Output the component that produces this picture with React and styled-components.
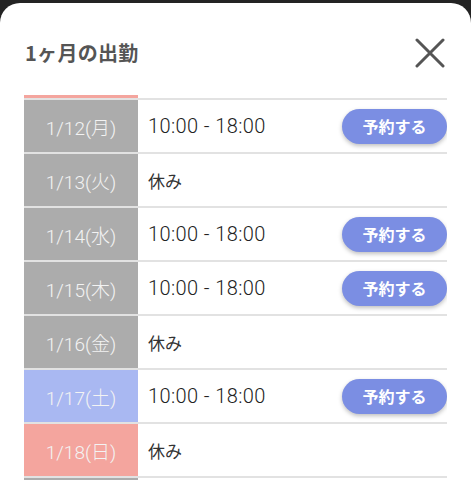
import React, { useLayoutEffect, useRef } from 'react'
import styled, { createGlobalStyle } from 'styled-components'

const GlobalStyle = createGlobalStyle`
html, body {
  margin: 0;
  padding: 0;
  background: #232323;
  font-family: "Noto Sans CJK JP", "Noto Sans", Roboto, sans-serif;
}
`

const shifts = [
  { date: '1/11', day: '日', time: null },
  { date: '1/12', day: '月', time: '10:00 - 18:00' },
  { date: '1/13', day: '火', time: null },
  { date: '1/14', day: '水', time: '10:00 - 18:00' },
  { date: '1/15', day: '木', time: '10:00 - 18:00' },
  { date: '1/16', day: '金', time: null },
  { date: '1/17', day: '土', time: '10:00 - 18:00' },
  { date: '1/18', day: '日', time: null },
  { date: '1/19', day: '月', time: '10:00 - 18:00' },
  { date: '1/20', day: '火', time: null },
]

const dayColor = (day) => {
  if (day === '土') return '#a9b8f2'
  if (day === '日') return '#f4a59e'
  return '#acacac'
}

function App() {
  const listRef = useRef(null)

  useLayoutEffect(() => {
    if (listRef.current) listRef.current.scrollTop = 49
  }, [])

  return (
    <>
      <GlobalStyle />
      <Sheet>
        <Header>
          <Title>1ヶ月の出勤</Title>
          <CloseButton aria-label="close">
            <svg width="30" height="30" viewBox="0 0 30 30">
              <path d="M2 2 L28 28 M28 2 L2 28" stroke="#555" strokeWidth="3" strokeLinecap="round" />
            </svg>
          </CloseButton>
        </Header>
        <List ref={listRef}>
          {shifts.map((s) => (
            <Row key={s.date}>
              <DateCell color={dayColor(s.day)}>
                {s.date}({s.day})
              </DateCell>
              <Body>
                {s.time ? <Time>{s.time}</Time> : <Off>休み</Off>}
                {s.time && <Reserve>予約する</Reserve>}
              </Body>
            </Row>
          ))}
        </List>
      </Sheet>
    </>
  )
}

const Sheet = styled.div`
margin-top:3px;
height:477px;
background:#fff;
border-radius:20px 20px 0 0;
display:flex;
flex-direction:column;
overflow:hidden;
`
const Header = styled.div`
height:92px;
padding:8px 24px 0 25px;
display:flex;
align-items:center;
justify-content:space-between;
box-sizing:border-box;
flex-shrink:0;
`
const Title = styled.h2`
margin:0;
font-size:20px;
line-height:28px;
font-weight:700;
color:#555;
letter-spacing:0.3px;
`
const CloseButton = styled.button`
background:none;
border:none;
padding:0;
margin-right:2px;
display:flex;
cursor:pointer;
`
const List = styled.div`
flex:1;
margin:0 24px;
overflow-y:auto;
scrollbar-width:none;
&::-webkit-scrollbar{
  display:none;
}
`
const Row = styled.div`
display:flex;
height:54px;
box-sizing:border-box;
border-bottom:2px solid #e2e2e2;
`
const DateCell = styled.div`
width:114px;
flex-shrink:0;
background:${(p) => p.color};
color:#f3f3f3;
font-size:19px;
font-weight:300;
display:flex;
align-items:center;
justify-content:center;
font-family:Roboto, "Noto Sans CJK JP", sans-serif;
`
const Body = styled.div`
flex:1;
display:flex;
align-items:center;
justify-content:space-between;
padding-left:10px;
`
const Time = styled.span`
font-size:20px;
font-weight:300;
letter-spacing:0.4px;
color:#222;
font-family:Roboto, "Noto Sans CJK JP", sans-serif;
`
const Off = styled.span`
font-size:17px;
color:#333;
`
const Reserve = styled.button`
width:105px;
height:35px;
border:none;
border-radius:18px;
background:#7b8ee3;
color:#fff;
font-family:"Noto Sans CJK JP", sans-serif;
font-size:16px;
font-weight:700;
box-shadow:0 2px 4px rgba(0,0,0,0.25);
cursor:pointer;
`

export default App
